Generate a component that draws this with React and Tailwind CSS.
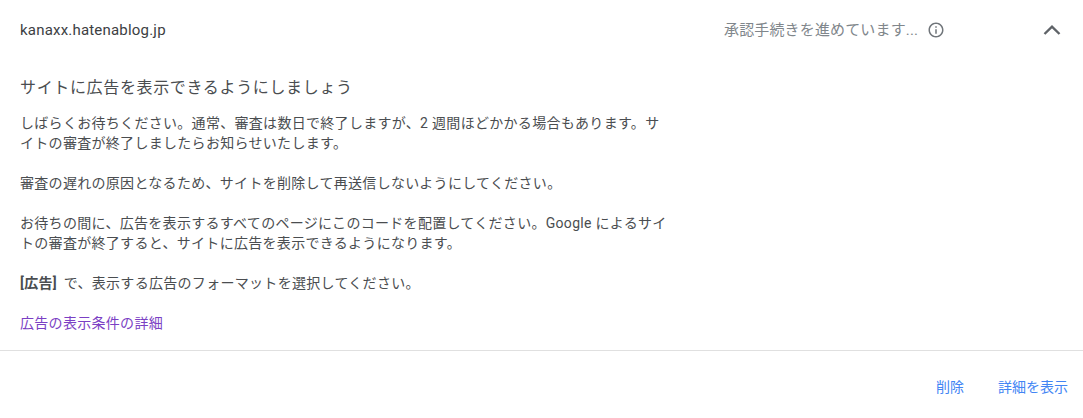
import React from "react";

export default function App() {
  return (
    <div className="w-[1083px] h-[418px] bg-white overflow-hidden font-['Roboto','Noto_Sans_CJK_JP',sans-serif] text-[14px] leading-5 text-[#4a4d50]">
      <div className="flex items-center h-[60px] pl-5">
        <div className="w-[704px] text-[15px] tracking-[0.2px] text-[#3c4043]">kanaxx.hatenablog.jp</div>
        <div className="flex items-center w-[316px] text-[15px] tracking-[0.15px] text-[#80868b]">
          <span>承認手続きを進めています...</span>
          <svg className="ml-[9px]" width="18" height="18" viewBox="0 0 24 24" fill="#70757a">
            <path d="M11 7h2v2h-2zm0 4h2v6h-2zm1-9C6.48 2 2 6.48 2 12s4.480 10 10 10 10-4.480 10-10S17.520 2 12 2zm0 18c-4.410 0-8-3.590-8-8s3.590-8 8-8 8 3.590 8 8-3.590 8-8 8z" />
          </svg>
        </div>
        <svg width="24" height="24" viewBox="0 0 24 24" fill="none" stroke="#5f6368" strokeWidth="2.4">
          <path d="M4.500 16 12 8.700 19.500 16" />
        </svg>
      </div>
      <div className="pl-5 h-[290px] pt-[16px]">
        <h2 className="text-[16px] tracking-[0.65px] leading-6 font-normal">サイトに広告を表示できるようにしましょう</h2>
        <div className="w-[648px] mt-[13px] flex flex-col gap-5 tracking-[0.3px]">
          <p>しばらくお待ちください。通常、審査は数日で終了しますが、2 週間ほどかかる場合もあります。サイトの審査が終了しましたらお知らせいたします。</p>
          <p>審査の遅れの原因となるため、サイトを削除して再送信しないようにしてください。</p>
          <p>お待ちの間に、広告を表示するすべてのページにこのコードを配置してください。Google によるサイトの審査が終了すると、サイトに広告を表示できるようになります。</p>
          <p><b className="font-bold mr-[3px]">[広告]</b> で、表示する広告のフォーマットを選択してください。</p>
          <a className="text-[#7b3fc4]">広告の表示条件の詳細</a>
        </div>
      </div>
      <div className="border-t border-[#e0e0e0] flex justify-end items-center gap-[34px] h-[68px] pr-[15px] pt-[4px] text-[#4285f4]">
        <a>削除</a>
        <a>詳細を表示</a>
      </div>
    </div>
  );
}
